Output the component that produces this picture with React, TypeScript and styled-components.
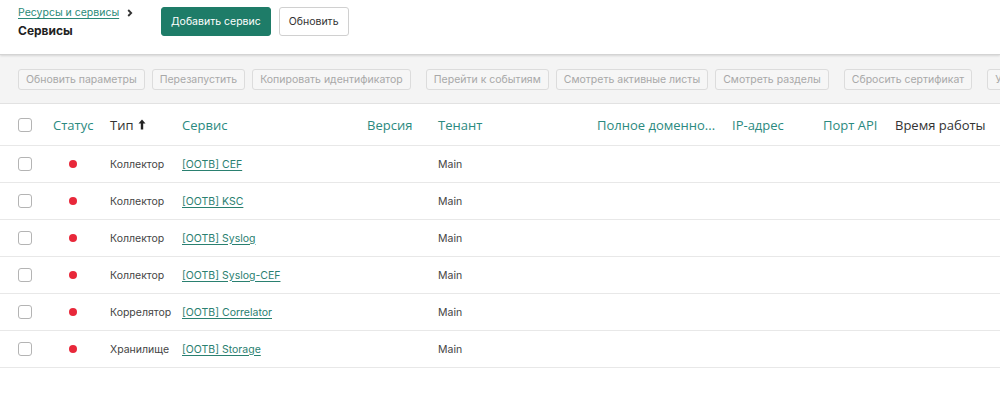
import { FC } from 'react';
import styled, { createGlobalStyle } from 'styled-components';

const GlobalStyle = createGlobalStyle`
  html, body {
    margin: 0;
    padding: 0;
    background: #fff;
    font-family: Inter, "Noto Sans", sans-serif;
    color: #333;
  }
  * { box-sizing: border-box; }
`;

const columns = '35px 57px 72px 185px 71px 159px 135px 91px 72px 1fr';

interface Service {
  id: number;
  type: string;
  name: string;
  tenant: string;
}

const services: Service[] = [
  { id: 1, type: 'Коллектор', name: '[OOTB] CEF', tenant: 'Main' },
  { id: 2, type: 'Коллектор', name: '[OOTB] KSC', tenant: 'Main' },
  { id: 3, type: 'Коллектор', name: '[OOTB] Syslog', tenant: 'Main' },
  { id: 4, type: 'Коллектор', name: '[OOTB] Syslog-CEF', tenant: 'Main' },
  { id: 5, type: 'Коррелятор', name: '[OOTB] Correlator', tenant: 'Main' },
  { id: 6, type: 'Хранилище', name: '[OOTB] Storage', tenant: 'Main' },
];

const toolGroups = [
  ['Обновить параметры', 'Перезапустить', 'Копировать идентификатор'],
  ['Перейти к событиям', 'Смотреть активные листы', 'Смотреть разделы'],
  ['Сбросить сертификат'],
  ['Удалить'],
];

const headers = [
  { label: 'Статус', accent: true },
  { label: 'Тип', accent: false, sorted: true },
  { label: 'Сервис', accent: true },
  { label: 'Версия', accent: true },
  { label: 'Тенант', accent: true },
  { label: 'Полное доменно...', accent: true },
  { label: 'IP-адрес', accent: true },
  { label: 'Порт API', accent: true },
  { label: 'Время работы', accent: false },
];

const Page = styled.div`
  width: 1000px;
  height: 393px;
  overflow: hidden;
  background: #fff;
`;

const Header = styled.header`
  height: 55px;
  display: flex;
  align-items: flex-start;
  padding: 6px 0 0 18px;
  border-bottom: 1px solid #d4d4d4;
  box-shadow: 0 1px 2px rgba(0, 0, 0, 0.12);
  position: relative;
  z-index: 1;
`;

const TitleBlock = styled.div`
  width: 143px;
  display: flex;
  flex-direction: column;
  gap: 4px;
`;

const Crumb = styled.div`
  display: flex;
  align-items: center;
  gap: 8px;
  font-size: 10.5px;
`;

const CrumbLink = styled.a`
  color: #2a8a78;
  text-decoration: underline;
  text-underline-offset: 2px;
`;

const Chevron: FC = () => (
  <svg width="6" height="8" viewBox="0 0 6 8">
    <path d="M1.2 1 L4.2 4 L1.2 7" fill="none" stroke="#333" strokeWidth="1.8" />
  </svg>
);

const Title = styled.h1`
  margin: 0;
  font-size: 12px;
  font-weight: 700;
  color: #222;
`;

const Actions = styled.div`
  display: flex;
  gap: 8px;
  padding-top: 1px;
`;

const Button = styled.button<{ $primary?: boolean }>`
  height: 29px;
  padding: 0 9px;
  border-radius: 3px;
  font-family: inherit;
  font-size: 10.5px;
  border: 1px solid ${(p) => (p.$primary ? '#1e7c68' : '#d0d0d0')};
  background: ${(p) => (p.$primary ? '#1e7c68' : '#fff')};
  color: ${(p) => (p.$primary ? '#fff' : '#333')};
`;

const Toolbar = styled.div`
  height: 49px;
  background: #f4f4f4;
  border-bottom: 1px solid #e2e2e2;
  display: flex;
  align-items: center;
  padding: 0 0 0 18px;
  gap: 15px;
  white-space: nowrap;
  overflow: hidden;
`;

const ToolGroup = styled.div`
  display: flex;
  gap: 7px;
`;

const ToolButton = styled.button`
  height: 21px;
  padding: 0 7px;
  border-radius: 3px;
  border: 1px solid #dcdcdc;
  background: #f6f6f6;
  color: #a8a8a8;
  font-family: inherit;
  font-size: 10.5px;
  flex-shrink: 0;
`;

const Row = styled.div<{ $head?: boolean }>`
  display: grid;
  grid-template-columns: ${columns};
  align-items: center;
  height: ${(p) => (p.$head ? '42px' : '37px')};
  padding-left: 18px;
  border-bottom: 1px solid #e8e8e8;
`;

const HeadCell = styled.div<{ $accent?: boolean }>`
  font-family: "Open Sans", "Noto Sans", sans-serif;
  font-size: 13px;
  color: ${(p) => (p.$accent ? '#2b8a80' : '#333')};
  white-space: nowrap;
  display: flex;
  align-items: center;
  gap: 4px;
`;

const Cell = styled.div`
  font-size: 10.5px;
  color: #444;
  white-space: nowrap;
`;

const LinkCell = styled.a`
  font-size: 10.5px;
  color: #2a8070;
  text-decoration: underline;
  text-underline-offset: 2px;
  white-space: nowrap;
`;

const Checkbox = styled.span`
  display: block;
  width: 14px;
  height: 14px;
  border: 1px solid #b4b4b4;
  border-radius: 3px;
  background: #fff;
`;

const DotCell = styled.div`
  display: flex;
  padding-left: 16px;
`;

const Dot = styled.span`
  width: 8px;
  height: 8px;
  border-radius: 50%;
  background: #e8283a;
`;

const SortArrow: FC = () => (
  <svg width="8" height="11" viewBox="0 0 8 11">
    <path d="M4 0.5 L7.5 4.5 H5.2 V10.5 H2.8 V4.5 H0.5 Z" fill="#222" />
  </svg>
);

export default function App() {
  return (
    <Page>
      <GlobalStyle />
      <Header>
        <TitleBlock>
          <Crumb>
            <CrumbLink>Ресурсы и сервисы</CrumbLink>
            <Chevron />
          </Crumb>
          <Title>Сервисы</Title>
        </TitleBlock>
        <Actions>
          <Button $primary>Добавить сервис</Button>
          <Button>Обновить</Button>
        </Actions>
      </Header>
      <Toolbar>
        {toolGroups.map((group, i) => (
          <ToolGroup key={i}>
            {group.map((label) => (
              <ToolButton key={label}>{label}</ToolButton>
            ))}
          </ToolGroup>
        ))}
      </Toolbar>
      <Row $head>
        <Checkbox />
        {headers.map((h) => (
          <HeadCell key={h.label} $accent={h.accent}>
            {h.label}
            {h.sorted && <SortArrow />}
          </HeadCell>
        ))}
      </Row>
      {services.map((s) => (
        <Row key={s.id}>
          <Checkbox />
          <DotCell>
            <Dot />
          </DotCell>
          <Cell>{s.type}</Cell>
          <LinkCell>{s.name}</LinkCell>
          <Cell />
          <Cell>{s.tenant}</Cell>
          <Cell />
          <Cell />
          <Cell />
          <Cell />
        </Row>
      ))}
    </Page>
  );
}
